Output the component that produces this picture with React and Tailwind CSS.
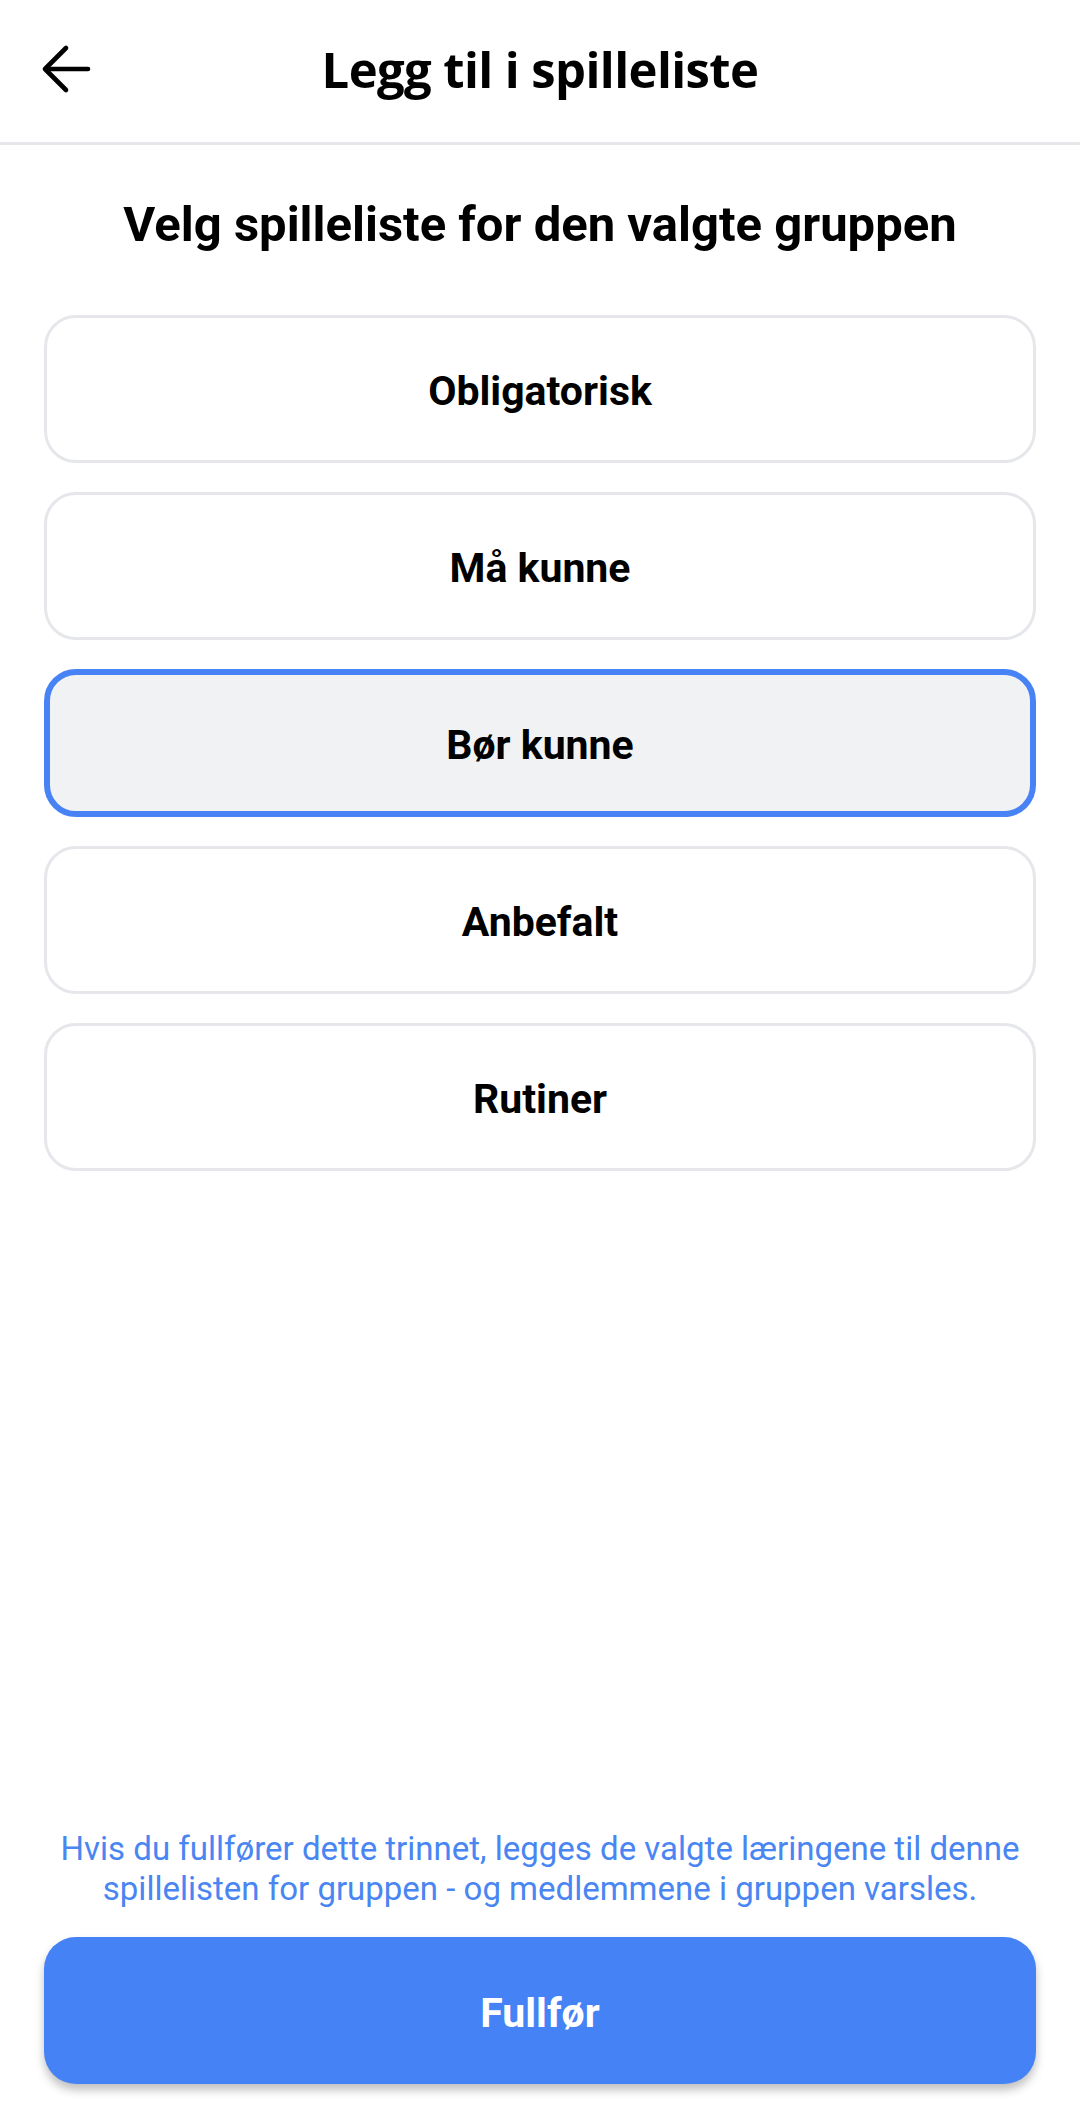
import React from "react";

const options = ["Obligatorisk", "Må kunne", "Bør kunne", "Anbefalt", "Rutiner"];

export default function App() {
  const selected = 2;
  return (
    <div className="flex h-[2125px] w-[1080px] flex-col bg-white" style={{ fontFamily: "Roboto, 'Liberation Sans', sans-serif" }}>
      <header className="relative flex h-[145px] shrink-0 items-center justify-center border-b-[3px] border-[#e5e7eb] pb-[2px]">
        <button className="absolute left-[40px] top-[44px] flex h-[50px] w-[52px] items-center justify-center">
          <svg width="50" height="50" viewBox="0 0 50 50" fill="none" stroke="#000" strokeWidth="4.6" strokeLinecap="round" strokeLinejoin="round">
            <path d="M47 25H5" />
            <path d="M25 4L4 25L25 46" />
          </svg>
        </button>
        <h1 className="text-[49px] font-bold tracking-[-0.6px] text-black" style={{ fontFamily: "'Open Sans', 'Noto Sans', sans-serif" }}>
          Legg til i spilleliste
        </h1>
      </header>

      <main className="flex flex-1 flex-col px-[44px]">
        <h2 className="mt-[52px] text-center text-[49px] font-bold leading-[56px] text-black">
          Velg spilleliste for den valgte gruppen
        </h2>
        <div className="mt-[62px] flex flex-col gap-[29px]">
          {options.map((o, i) => (
            <button
              key={o}
              className={
                i === selected
                  ? "flex h-[148px] items-center justify-center rounded-[32px] border-[6px] border-[#4883f5] bg-[#f1f2f4] pt-[6px] text-[41px] font-bold text-black"
                  : "flex h-[148px] items-center justify-center rounded-[32px] border-[3px] border-[#e5e7eb] bg-white pt-[6px] text-[41px] font-bold text-black"
              }
            >
              {o}
            </button>
          ))}
        </div>

        <div className="mt-auto flex flex-col">
          <p className="text-center text-[33px] leading-[40px] text-[#4a86f2]">
            Hvis du fullfører dette trinnet, legges de valgte læringene til denne spillelisten for gruppen - og medlemmene i gruppen varsles.
          </p>
          <button className="mb-[41px] mt-[28px] flex h-[147px] items-center justify-center rounded-[32px] bg-[#4582f5] pt-[6px] text-[41px] font-bold text-white shadow-[0_6px_10px_rgba(0,0,0,0.25)]">
            Fullfør
          </button>
        </div>
      </main>
    </div>
  );
}
